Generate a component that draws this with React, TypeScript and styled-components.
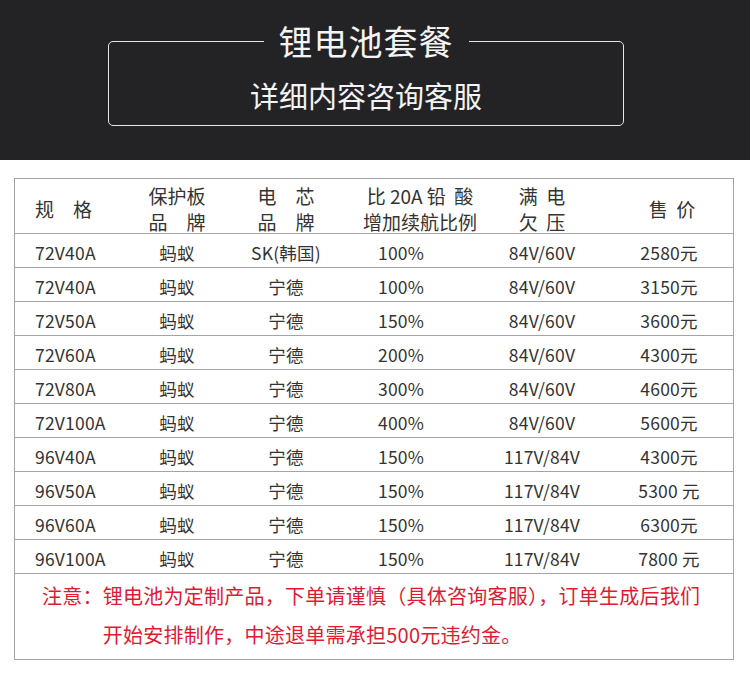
import React from "react";
import styled, { createGlobalStyle } from "styled-components";

const GlobalStyle = createGlobalStyle`
  html, body {
    margin: 0;
    padding: 0;
    background: #ffffff;
  }
  body {
    font-family: "Noto Sans CJK SC", "Noto Sans", sans-serif;
    color: #333333;
  }
`;

const Page = styled.div`
  width: 750px;
  height: 680px;
  overflow: hidden;
  background: #ffffff;
`;

const Banner = styled.header`
  height: 160px;
  box-sizing: border-box;
  padding-top: 21px;
  background: #232326;
`;

const Frame = styled.fieldset`
  box-sizing: border-box;
  width: 516px;
  margin: 0 0 0 108px;
  padding: 16px 0 12px;
  border: 1.5px solid #e6e6e6;
  border-radius: 5px;
  min-inline-size: 0;
`;

const Title = styled.legend`
  margin: 0 auto;
  padding: 0 15px;
  font-size: 34px;
  line-height: 40px;
  color: #f4f4f4;
  letter-spacing: 1px;
`;

const Subtitle = styled.div`
  text-align: center;
  font-size: 29px;
  line-height: 36px;
  color: #f4f4f4;
`;

const Sheet = styled.section`
  width: 720px;
  box-sizing: border-box;
  margin: 18px 0 0 14px;
  border: 1px solid #a4a4a4;
`;

const Grid = styled.div<{ $height: number }>`
  display: grid;
  grid-template-columns: 107px 110px 108px 146px 112px 135px;
  height: ${(p) => p.$height}px;
  box-sizing: border-box;
  border-bottom: 1px solid #a4a4a4;
`;

const HeadCell = styled.div<{ $align?: "left" | "center"; $pl?: number; $spacing?: number }>`
  display: flex;
  flex-direction: column;
  justify-content: center;
  align-items: ${(p) => (p.$align === "left" ? "flex-start" : "center")};
  padding-left: ${(p) => p.$pl ?? 0}px;
  padding-top: 4px;
  font-size: 19px;
  line-height: 26px;
  letter-spacing: ${(p) => p.$spacing ?? 0}px;
  color: #333333;
  white-space: pre;
`;

const Cell = styled.div<{ $align?: "left" | "center"; $pl?: number }>`
  display: flex;
  align-items: center;
  justify-content: ${(p) => (p.$align === "left" ? "flex-start" : "center")};
  padding-left: ${(p) => p.$pl ?? 0}px;
  padding-top: 4px;
  font-size: 17.5px;
  letter-spacing: 0.2px;
  color: #333333;
  white-space: pre;
`;

const Notice = styled.div`
  display: flex;
  padding: 2px 0 5px 27px;
  font-size: 20px;
  line-height: 39px;
  letter-spacing: 0.25px;
  color: #df1a33;
  white-space: nowrap;
`;

const NoticeLabel = styled.span`
  flex: none;
`;

const NoticeBody = styled.div`
  display: flex;
  flex-direction: column;
`;

type Row = {
  spec: string;
  board: string;
  cell: string;
  ratio: string;
  volt: string;
  price: string;
};

const rows: Row[] = [
  { spec: "72V40A", board: "蚂蚁", cell: "SK(韩国)", ratio: "100%", volt: "84V/60V", price: "2580元" },
  { spec: "72V40A", board: "蚂蚁", cell: "宁德", ratio: "100%", volt: "84V/60V", price: "3150元" },
  { spec: "72V50A", board: "蚂蚁", cell: "宁德", ratio: "150%", volt: "84V/60V", price: "3600元" },
  { spec: "72V60A", board: "蚂蚁", cell: "宁德", ratio: "200%", volt: "84V/60V", price: "4300元" },
  { spec: "72V80A", board: "蚂蚁", cell: "宁德", ratio: "300%", volt: "84V/60V", price: "4600元" },
  { spec: "72V100A", board: "蚂蚁", cell: "宁德", ratio: "400%", volt: "84V/60V", price: "5600元" },
  { spec: "96V40A", board: "蚂蚁", cell: "宁德", ratio: "150%", volt: "117V/84V", price: "4300元" },
  { spec: "96V50A", board: "蚂蚁", cell: "宁德", ratio: "150%", volt: "117V/84V", price: "5300 元" },
  { spec: "96V60A", board: "蚂蚁", cell: "宁德", ratio: "150%", volt: "117V/84V", price: "6300元" },
  { spec: "96V100A", board: "蚂蚁", cell: "宁德", ratio: "150%", volt: "117V/84V", price: "7800 元" },
];

export default function App() {
  return (
    <Page>
      <GlobalStyle />
      <Banner>
        <Frame>
          <Title>锂电池套餐</Title>
          <Subtitle>详细内容咨询客服</Subtitle>
        </Frame>
      </Banner>
      <Sheet>
        <Grid $height={55}>
          <HeadCell $align="left" $pl={20}>规　格</HeadCell>
          <HeadCell>
            <span>保护板</span>
            <span>品　牌</span>
          </HeadCell>
          <HeadCell>
            <span>电　芯</span>
            <span>品　牌</span>
          </HeadCell>
          <HeadCell $pl={14}>
            <span>比 20A 铅  酸</span>
            <span>增加续航比例</span>
          </HeadCell>
          <HeadCell>
            <span>满  电</span>
            <span>欠  压</span>
          </HeadCell>
          <HeadCell $pl={13}>售  价</HeadCell>
        </Grid>
        {rows.map((r, i) => (
          <Grid $height={34} key={i}>
            <Cell $align="left" $pl={20}>{r.spec}</Cell>
            <Cell>{r.board}</Cell>
            <Cell>{r.cell}</Cell>
            <Cell $align="left" $pl={38}>{r.ratio}</Cell>
            <Cell>{r.volt}</Cell>
            <Cell $pl={7}>{r.price}</Cell>
          </Grid>
        ))}
        <Notice>
          <NoticeLabel>注意：</NoticeLabel>
          <NoticeBody>
            <span>锂电池为定制产品，下单请谨慎（具体咨询客服），订单生成后我们</span>
            <span>开始安排制作，中途退单需承担500元违约金。</span>
          </NoticeBody>
        </Notice>
      </Sheet>
    </Page>
  );
}
